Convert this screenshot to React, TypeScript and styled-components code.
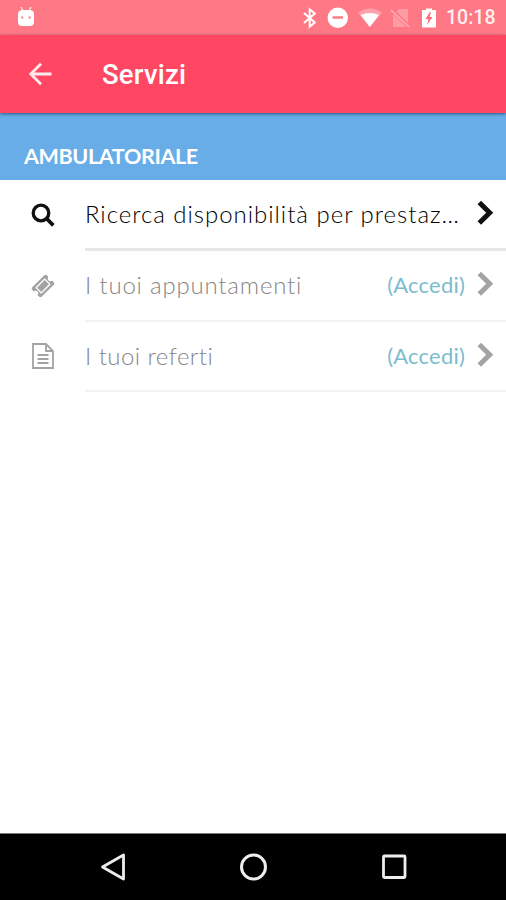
import React from "react";
import styled, { createGlobalStyle } from "styled-components";

const GlobalStyle = createGlobalStyle`
  * { box-sizing: border-box; }
  html, body { margin: 0; padding: 0; background: #fff; }
`;

const Screen = styled.div`
  width: 506px;
  height: 900px;
  display: flex;
  flex-direction: column;
  overflow: hidden;
  background: #fff;
  font-family: Lato, "Open Sans", sans-serif;
`;

const StatusBar = styled.div`
  flex: none;
  height: 35px;
  padding: 0 10px 0 16px;
  display: flex;
  align-items: center;
  justify-content: space-between;
  background: #ff7885;
  color: #fff;
`;

const StatusIcons = styled.div`
  display: flex;
  align-items: center;
  height: 35px;
`;

const Clock = styled.span`
  width: 50px;
  margin-left: 8px;
  font: 500 19.5px/37px Roboto, sans-serif;
  color: #ffeef0;
  white-space: nowrap;
`;

const AppBar = styled.header`
  flex: none;
  height: 78px;
  display: flex;
  align-items: center;
  padding-left: 26px;
  background: #ff4662;
  color: #fff;
  position: relative;
  box-shadow: 0 1px 3px rgba(0, 40, 80, 0.65);
`;

const Title = styled.h1`
  margin: 2px 0 0 48px;
  font: 500 27.5px/32px Roboto, sans-serif;
  letter-spacing: 0.2px;
`;

const SectionHeader = styled.h2`
  flex: none;
  height: 67px;
  margin: 0;
  padding: 29px 0 0 24px;
  background: #68ade8;
  color: #fff;
  font-weight: 700;
  font-size: 21.5px;
  line-height: 28px;
  letter-spacing: -0.35px;
`;

const List = styled.ul`
  flex: 1;
  margin: 0;
  padding: 0;
  list-style: none;
`;

const Row = styled.li<{ $active?: boolean }>`
  display: flex;
  height: ${(p) => (p.$active ? 71 : 70.5)}px;
  color: ${(p) => (p.$active ? "#111" : "#a3a3a3")};
`;

const IconCell = styled.div`
  flex: none;
  width: 85px;
  height: 69px;
  display: flex;
  align-items: center;
  justify-content: center;
`;

const RowBody = styled.div<{ $active?: boolean }>`
  flex: 1;
  min-width: 0;
  display: flex;
  align-items: center;
  padding-right: 11px;
  border-bottom: ${(p) => (p.$active ? "3px solid #e6e6e6" : "2px solid #f2f2f2")};
`;

const Label = styled.span<{ $active?: boolean; $tracking: number }>`
  flex: 1;
  min-width: 0;
  white-space: nowrap;
  font-size: 24px;
  line-height: 32px;
  font-weight: 300;
  color: ${(p) => (p.$active ? "#000" : "#868686")};
  letter-spacing: ${(p) => p.$tracking}px;
`;

const Access = styled.span`
  margin-right: 12px;
  font-size: 22px;
  line-height: 32px;
  letter-spacing: 0.2px;
  color: #7bbccd;
`;

const NavBar = styled.nav`
  flex: none;
  height: 67px;
  display: flex;
  align-items: center;
  justify-content: center;
  gap: 112px;
  background: #000;
  border-top: 1px solid #777;
`;

const Chevron = () => (
  <svg width="18" height="28" viewBox="0 0 18 28">
    <path d="M2.3 2.5 12.7 12.8 2.3 23" fill="none" stroke="currentColor" strokeWidth="5" />
  </svg>
);

const SearchIcon = () => (
  <svg width="24" height="24" viewBox="0 0 24 24" fill="none" stroke="currentColor">
    <circle cx="10" cy="10" r="7.8" strokeWidth="3.3" />
    <path d="m15.5 15.5 6.8 6.8" strokeWidth="3.8" />
  </svg>
);

const TicketIcon = () => (
  <svg width="24" height="24" viewBox="0 0 1792 1792" fill="currentColor">
    <path d="M1024 452l316 316-572 572-316-316zm-211 979l618-618q19-19 19-45t-19-45l-362-362q-18-18-45-18t-45 18l-618 618q-19 19-19 45t19 45l362 362q18 18 45 18t45-18zm889-637l-907 908q-37 37-90.5 37t-90.5-37l-126-126q56-56 56-136t-56-136-136-56-136 56l-125-126q-37-37-37-90.5t37-90.5l907-906q37-37 90.5-37t90.5 37l125 125q-56 56-56 136t56 136 136 56 136-56l126 125q37 37 37 90.5t-37 90.5z" />
    <path d="M1024 560l208 208-464 464-208-208z" />
  </svg>
);

const DocumentIcon = () => (
  <svg width="22" height="26" viewBox="0 0 22 26" fill="none" stroke="currentColor" strokeWidth="1.8">
    <path d="M1 1h13l7 7v17H1zM14 1v7h7M5.5 12h11M5.5 16h11M5.5 20h11" />
  </svg>
);

const AndroidHead = () => (
  <svg width="20" height="24" viewBox="0 0 20 24">
    <path d="m5 1 2 4M15 1l-2 4" stroke="#ffe4e6" strokeWidth="1.4" />
    <path d="M2 8q0-4 5-4h6q5 0 5 4v8q0 4-4 4H6q-4 0-4-4z" fill="#fff" />
    <circle cx="6.2" cy="11.5" r="1.2" fill="#ff8d98" />
    <circle cx="13.6" cy="11.5" r="1.2" fill="#ff8d98" />
  </svg>
);

const StatusGlyphs = () => (
  <svg width="136" height="35" viewBox="302 0 136 35">
    <path d="m304 13 10.8 9.5-5.1 4.2V9.3l5.1 4.2L304 23" fill="none" stroke="#fff" strokeWidth="2" />
    <circle cx="337.8" cy="17.8" r="10.2" fill="#fff" />
    <path d="M332.5 17.5h10.5" stroke="#ff7885" strokeWidth="2.4" />
    <path d="M358 12.5q12-8 24 0L369.8 27z" fill="#ffa2ab" />
    <path d="M360.5 15q9.3-4 18.6 0L369.8 27z" fill="#fff" />
    <path d="M393 14l6-5h9v18h-15z" fill="#ff9ba4" />
    <path d="m391 9 18 18" stroke="#ff7885" strokeWidth="4" />
    <path d="m391 10 18 17" stroke="#ffb2b9" strokeWidth="1.4" />
    <path d="M422 10h4V8.5h6V10h4v17.5h-14z" fill="#fff" />
    <path d="m430 12-4.5 7h3L427 25l5.5-8h-3l1.5-5z" fill="#ff6878" />
  </svg>
);

const BackArrow = () => (
  <svg width="28" height="26" viewBox="0 0 28 26" fill="none" stroke="#ffe9ec" strokeWidth="2.8">
    <path d="M15 2.8 4.8 13 15 23.2M4.8 13h20.7" />
  </svg>
);

const rows = [
  { label: "Ricerca disponibilità per prestaz…", icon: <SearchIcon />, active: true, tracking: 0.97 },
  { label: "I tuoi appuntamenti", icon: <TicketIcon />, access: "(Accedi)", tracking: 0.8 },
  { label: "I tuoi referti", icon: <DocumentIcon />, access: "(Accedi)", tracking: 0.45 },
];

export default function App() {
  return (
    <Screen>
      <GlobalStyle />
      <StatusBar>
        <AndroidHead />
        <StatusIcons>
          <StatusGlyphs />
          <Clock>10:18</Clock>
        </StatusIcons>
      </StatusBar>
      <AppBar>
        <BackArrow />
        <Title>Servizi</Title>
      </AppBar>
      <SectionHeader>AMBULATORIALE</SectionHeader>
      <List>
        {rows.map((row) => (
          <Row key={row.label} $active={row.active}>
            <IconCell>{row.icon}</IconCell>
            <RowBody $active={row.active}>
              <Label $active={row.active} $tracking={row.tracking}>{row.label}</Label>
              {row.access && <Access>{row.access}</Access>}
              <Chevron />
            </RowBody>
          </Row>
        ))}
      </List>
      <NavBar>
        <svg width="28" height="30" viewBox="0 0 28 30">
          <path d="M25.5 3v24L4.5 15z" fill="none" stroke="#eee" strokeWidth="2.8" strokeLinejoin="round" />
        </svg>
        <svg width="30" height="30" viewBox="0 0 30 30">
          <circle cx="15.5" cy="15" r="12" fill="none" stroke="#eee" strokeWidth="3" />
        </svg>
        <svg width="28" height="30" viewBox="0 0 28 30">
          <rect x="3.5" y="4" width="21.5" height="21.5" rx="1" fill="none" stroke="#eee" strokeWidth="2.8" />
        </svg>
      </NavBar>
    </Screen>
  );
}
